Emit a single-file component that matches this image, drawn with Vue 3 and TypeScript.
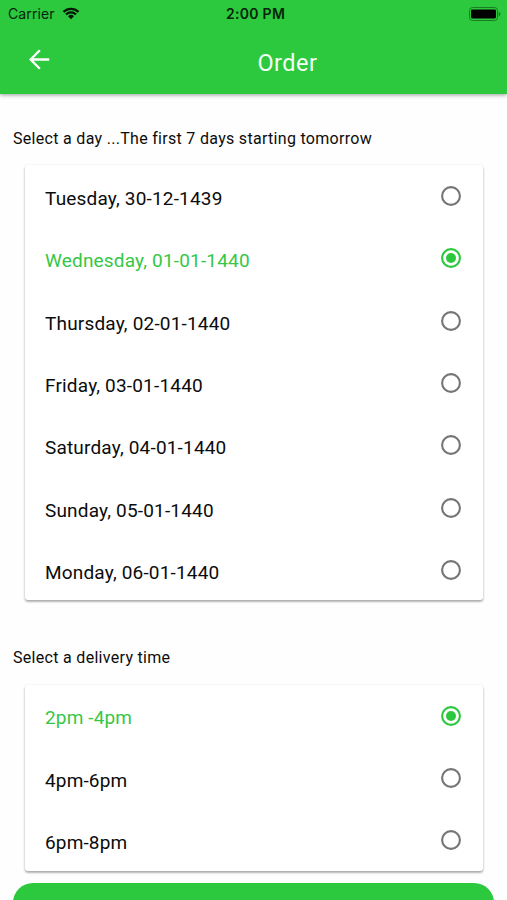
<script setup lang="ts">
import { ref } from 'vue'

const days: string[] = [
  'Tuesday, 30-12-1439',
  'Wednesday, 01-01-1440',
  'Thursday, 02-01-1440',
  'Friday, 03-01-1440',
  'Saturday, 04-01-1440',
  'Sunday, 05-01-1440',
  'Monday, 06-01-1440',
]
const times: string[] = ['2pm -4pm', '4pm-6pm', '6pm-8pm']

const selectedDay = ref(1)
const selectedTime = ref(0)
</script>

<template>
  <main class="screen">
    <header class="header">
      <div class="status">
        <div class="carrier">
          <span>Carrier</span>
          <svg class="wifi" viewBox="0 0 18 13" aria-hidden="true">
            <path d="M1.5 4.9a10.7 10.7 0 0 1 15 0" />
            <path d="M4 7.5a7.1 7.1 0 0 1 10 0" />
            <path class="wifi-dot" d="M9 12.3 6 9.3a4.3 4.3 0 0 1 6 0Z" />
          </svg>
        </div>
        <span class="clock">2:00 PM</span>
        <svg class="battery" viewBox="0 0 32 14" aria-hidden="true">
          <rect class="battery-case" x=".5" y=".5" width="28" height="13" rx="3" />
          <rect x="2" y="2.6" width="25" height="8.8" rx="1.4" />
          <path class="battery-tip" d="M29.7 4.7c2.3.8 2.3 3.8 0 4.6Z" />
        </svg>
      </div>
      <div class="bar">
        <button class="back" aria-label="Back">
          <svg viewBox="0 0 20 20">
            <path d="M19.3 10H1.8M10.3 1.2 1.6 10l8.7 8.8" />
          </svg>
        </button>
        <h1 class="title">Order</h1>
      </div>
    </header>

    <h2 class="label label-day">Select a day ...The first 7 days starting tomorrow</h2>
    <ul class="card">
      <li
        v-for="(day, i) in days"
        :key="day"
        class="row"
        :class="{ selected: i === selectedDay }"
        @click="selectedDay = i"
      >
        <span class="text day">{{ day }}</span>
        <svg class="radio" viewBox="0 0 20 20">
          <circle class="ring" cx="10" cy="10" r="8.9" />
          <circle v-if="i === selectedDay" class="dot" cx="10" cy="10" r="5" />
        </svg>
      </li>
    </ul>

    <h2 class="label label-time">Select a delivery time</h2>
    <ul class="card">
      <li
        v-for="(time, i) in times"
        :key="time"
        class="row"
        :class="{ selected: i === selectedTime }"
        @click="selectedTime = i"
      >
        <span class="text">{{ time }}</span>
        <svg class="radio" viewBox="0 0 20 20">
          <circle class="ring" cx="10" cy="10" r="8.9" />
          <circle v-if="i === selectedTime" class="dot" cx="10" cy="10" r="5" />
        </svg>
      </li>
    </ul>

    <button class="submit" aria-label="Continue"></button>
  </main>
</template>

<style>
body {
  margin: 0;
  background: #fefefe;
}
</style>

<style scoped>
.screen {
  box-sizing: border-box;
  width: 507px;
  height: 900px;
  overflow: hidden;
  background: #fefefe;
  color: #0c0c0c;
  font-family: Roboto, "Liberation Sans", sans-serif;
}
.header {
  height: 94px;
  background: #2cc83d;
  box-shadow: 0 1px 4px rgba(0, 0, 0, 0.4);
}
.status {
  display: grid;
  grid-template-columns: 1fr auto 1fr;
  align-items: center;
  height: 27px;
  padding: 0 6px 0 8px;
  color: #06240a;
  font-family: Inter, sans-serif;
  font-size: 14px;
}
.carrier {
  display: flex;
  align-items: center;
  gap: 7px;
  letter-spacing: 0.1px;
}
.wifi {
  width: 18px;
  height: 13px;
  fill: none;
  stroke: #041a07;
  stroke-width: 2.3;
}
.wifi .wifi-dot {
  fill: #041a07;
  stroke: none;
}
.clock {
  padding-left: 2px;
  font-weight: 600;
  letter-spacing: 0.3px;
}
.battery {
  justify-self: end;
  width: 32px;
  height: 14px;
  fill: #000;
}
.battery-case {
  fill: none;
  stroke: #1a7d26;
}
.battery-tip {
  fill: #1a7d26;
}
.bar {
  display: grid;
  grid-template-columns: 70px 1fr 2px;
  align-items: center;
  height: 67px;
}
.back {
  display: flex;
  margin: 0 0 2px 29px;
  padding: 0;
  border: 0;
  background: none;
}
.back svg {
  width: 21px;
  height: 21px;
  fill: none;
  stroke: #fff;
  stroke-width: 2.3;
}
.title {
  margin: 5px 0 0;
  color: #f4fff5;
  font-size: 23.5px;
  font-weight: 400;
  letter-spacing: 0.5px;
  text-align: center;
}
.label {
  margin: 0;
  padding-left: 13px;
  font-size: 16px;
  font-weight: 400;
  letter-spacing: 0.3px;
  line-height: 20px;
  white-space: nowrap;
}
.label-day {
  padding-top: 35px;
  padding-bottom: 16.4px;
}
.label-time {
  padding-top: 47.5px;
  padding-bottom: 17.4px;
}
.card {
  display: grid;
  gap: 1.33px;
  margin: 0 24.5px 0 25px;
  padding: 0;
  border-radius: 3px;
  background: #fff;
  box-shadow: 0 2px 2px rgba(0, 0, 0, 0.22), 0 1px 3px rgba(0, 0, 0, 0.18);
  list-style: none;
}
.row {
  display: flex;
  align-items: center;
  justify-content: space-between;
  height: 61px;
  padding: 0 22px 0 20px;
}
.text {
  padding-top: 5px;
  font-size: 19px;
  letter-spacing: 0.15px;
  line-height: 24px;
}
.day {
  padding-top: 6px;
  letter-spacing: 0.18px;
}
.radio {
  width: 20px;
  height: 20px;
}
.ring {
  fill: none;
  stroke: #757575;
  stroke-width: 2.1;
}
.selected {
  color: #36c746;
}
.selected .ring {
  stroke: #2cc83d;
}
.dot {
  fill: #2cc83d;
}
.submit {
  display: block;
  width: 481px;
  height: 54px;
  margin: 12px 0 0 13px;
  border: 0;
  border-radius: 20px;
  background: #2cc83d;
}
</style>
